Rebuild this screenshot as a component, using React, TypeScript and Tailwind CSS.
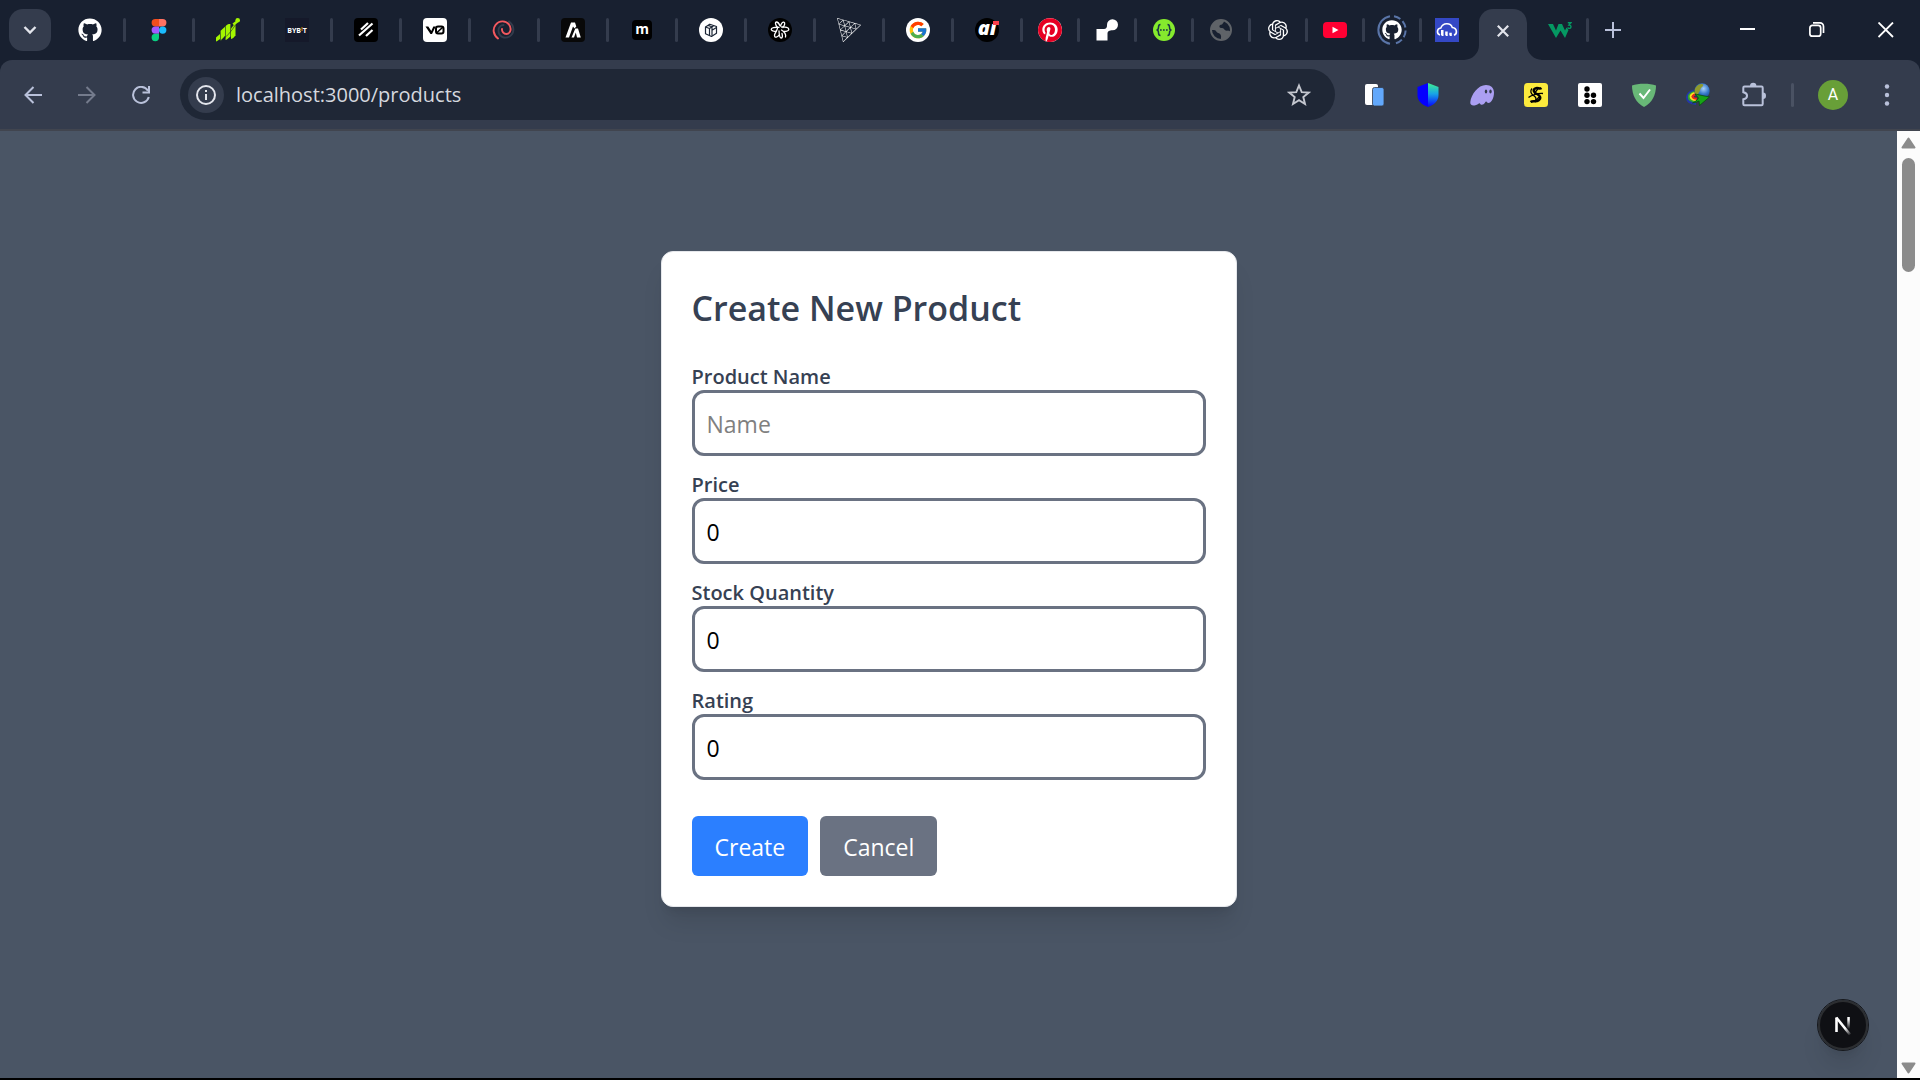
import type { ReactNode } from "react";
import { FaGithub } from "react-icons/fa";
import { FcGoogle } from "react-icons/fc";
import { SiThreedotjs, SiOpenai, SiPinterest } from "react-icons/si";

const FigmaIcon = () => (
  <svg viewBox="0 0 24 24" className="size-6">
    <path d="M8.3 1H12v7.4H8.3a3.7 3.7 0 0 1 0-7.4Z" fill="#f24e1e" />
    <path d="M12 1h3.7a3.7 3.7 0 0 1 0 7.4H12Z" fill="#ff7262" />
    <path d="M8.3 8.4H12v7.4H8.3a3.7 3.7 0 0 1 0-7.4Z" fill="#a259ff" />
    <circle cx="15.7" cy="12.1" r="3.7" fill="#1abcfe" />
    <path d="M8.3 15.8H12v3.7a3.7 3.7 0 1 1-3.7-3.7Z" fill="#0acf83" />
  </svg>
);

const BarsIcon = () => (
  <svg viewBox="0 0 24 24" className="size-6" fill="#a4f600">
    <path d="M0 19.5 4 16v5L0 24Z" />
    <path d="M4.6 12.8 9 8.8v9L4.6 23Z" />
    <path d="M9.6 8.2c1-1.6 2.6-2.2 4.8-2.2v12.5c-1.6 1.2-3 3-4.8 3.5Z" />
    <path d="M15 10.5 19.5 5v12.5c-1.2 1.5-2.6 3-4.5 3.5Z" />
    <circle cx="21.7" cy="2.3" r="2.3" />
    <path d="m16.5 5.5 4-3 1.5 2-4 3Z" />
    <path d="M0 23.8c7-1 13-7 19.5-17" fill="none" stroke="#182030" strokeWidth="0.6" />
  </svg>
);

const BybitIcon = () => (
  <span className="flex size-6 items-center justify-center bg-[#15192a] text-[7px] leading-none font-bold text-white">
    BYB<span className="pb-0.5 text-[5px] text-[#f7a600]">I</span>T
  </span>
);

const SlashesIcon = () => (
  <svg viewBox="0 0 24 24" className="size-6">
    <rect width="24" height="24" rx="4" fill="#000" />
    <path d="M7 11.500 14 5M5 17.500 18.500 5.500M12 18l6.500-6" fill="none" stroke="#fff" strokeWidth="2.2" />
  </svg>
);

const V0Icon = () => (
  <svg viewBox="0 0 24 24" className="size-6">
    <rect width="24" height="24" rx="4" fill="#fff" />
    <path d="M2.500 8.500h2.800L8.300 13l2-4.500h2.400L9 16H7.500Z" fill="#000" />
    <rect x="13" y="8.5" width="7.5" height="7" rx="2" fill="none" stroke="#000" strokeWidth="2" />
    <path d="m13.500 15 6.500-6" fill="none" stroke="#000" strokeWidth="1.7" />
  </svg>
);

const SpiralIcon = () => (
  <svg viewBox="0 0 24 24" className="size-6" fill="none" strokeWidth="1.9" strokeLinecap="round">
    <path d="M17 3.5c6 4.500 5.500 12 .5 15-5 2.800-11 0-11-6 0-3.500 2.500-5.500 5-5.500" stroke="#333c4c" />
    <path d="M6 20.500C1 16.500 .5 11 3.500 7 7 2.200 14 2.200 17 6.500c3 4 1.500 9.500-2.500 9.500-3 0-4.800-2.500-4.500-5" stroke="#f4595f" />
  </svg>
);

const ArchIcon = () => (
  <svg viewBox="0 0 24 24" className="size-6">
    <rect width="24" height="24" rx="4" fill="#080808" />
    <path d="M4.500 19.500 10 4.500h4l1.300 4-1.800 2-1.500-2-4 11Z" fill="#fff" />
    <path d="m10.500 19.500 3.800-9H17l2.800 9H16l-1.200-5-1.800 5Z" fill="#fff" />
  </svg>
);

const MIcon = () => (
  <span className="flex size-5 items-center justify-center rounded-sm bg-black pb-0.5 text-sm leading-none font-bold text-white">
    m
  </span>
);

const CubeIcon = () => (
  <svg viewBox="0 0 24 24" className="size-6" fill="none" stroke="#1c2636" strokeWidth="1.2" strokeLinejoin="round">
    <circle cx="12" cy="12" r="12" fill="#fff" stroke="none" />
    <path d="m6.500 9 4.300-2.800 6.700 2.300v6.700l-5 3.300-6-2.800Z" />
    <path d="m6.500 9 4 1.500v6.800M10.500 10.500 15 7.600M9 7.400l4 1.400v8.900M13 12.200l4.500-2.700" />
  </svg>
);

const AtomIcon = () => (
  <svg viewBox="0 0 24 24" className="size-6" fill="none" stroke="#fff" strokeWidth="1.3" strokeLinecap="round">
    <circle cx="12" cy="12" r="12" fill="#000" stroke="none" />
    <path d="M8 13.500c-3-.3-4.800-1.200-4.800-2.300C3.200 9.800 6.500 9 11 9.300M13.500 9c4-.3 7.300.6 7.300 2.200 0 1.300-2 2.200-5 2.300" />
    <path d="M9.500 9.500C7 6.500 7 4 8.500 4c1.200 0 2.600 1.500 3.600 4M12.500 8c.8-2.700 2.200-4.200 3.400-3.800 1.400.4 1 2.800-1 5.300" />
    <path d="M9.700 9.500c-.5 3.500-3.200 5.500-3.200 8 0 2.700 3.200 2 5-1M11 13c.2 4 .8 7 2.200 7s1.500-2 .8-4.500M13.500 12c3 2 4.800 4.500 4 7" />
  </svg>
);

const GoogleIcon = () => (
  <span className="flex size-6 items-center justify-center rounded-full bg-white">
    <FcGoogle className="size-5" />
  </span>
);

const AiIcon = () => (
  <span className="relative flex size-6 items-center justify-center rounded-full bg-black pb-1 text-xl leading-none font-extrabold text-white italic">
    aı
    <span className="absolute top-[3px] right-0 h-1 w-1.5 bg-[#f8404c]" />
  </span>
);

const PinterestIcon = () => (
  <span className="flex size-6 rounded-full bg-white">
    <SiPinterest className="size-6 text-[#e60023]" />
  </span>
);

const RenderIcon = () => (
  <svg viewBox="0 0 24 24" className="size-6" fill="#fff">
    <path d="M1.500 11H8c3.500 0 4-1.500 4-4a5.500 5.500 0 1 1 5.500 5.300c-3 0-5 .7-5 3.700v6.500h-11Z" />
  </svg>
);

const SwaggerIcon = () => (
  <svg viewBox="0 0 24 24" className="size-6">
    <circle cx="12" cy="12" r="11" fill="#85ea2d" />
    <g fill="none" stroke="#173647" strokeWidth="1.5">
      <path d="M8.500 6.500c-2 0-2 1-2 2.700S6 12 4.500 12c1.500 0 2 1 2 2.700s0 2.800 2 2.800M15.500 6.500c2 0 2 1 2 2.700s.5 2.800 2 2.800c-1.500 0-2 1-2 2.700s0 2.800-2 2.800" />
      <path d="M8 12h8" strokeDasharray="1.7 1.3" />
    </g>
  </svg>
);

const GlobeIcon = () => (
  <svg viewBox="0 0 24 24" className="size-6">
    <circle cx="12" cy="12" r="10" fill="none" stroke="#5f6368" strokeWidth="2" />
    <path d="M2 12C2 6 7 2 13 2c2 .2 2.500 1 1.500 2.500L13 6.500c-1.800.4-3 1-2.500 2.500.6 1.500 3.500.5 4.500 2s2 2 4 1.500l2.500 1C20 19 17 22 12.500 22c-1.500-1.500.5-3-1-5.500C10.500 14.500 8 15.500 7 13c-1-1.500-3-1-5-1Z" fill="#5f6368" />
  </svg>
);

const OpenAiIcon = () => <SiOpenai className="size-5 text-white" />;

const YoutubeIcon = () => (
  <svg viewBox="0 0 24 24" className="size-6">
    <rect y="4" width="24" height="16" rx="4" fill="#ff0033" />
    <path d="m9.500 8.800 6 3.200-6 3.200Z" fill="#fff" />
  </svg>
);

const GithubRingIcon = () => (
  <span className="relative flex items-center justify-center">
    <svg viewBox="0 0 30 30" className="absolute size-[30px] max-w-none" fill="none" stroke="#5a75a8" strokeWidth="2">
      <path d="M13 1.200A14 14 0 0 0 13 28.800" />
      <path d="M17 1.200A14 14 0 0 1 17 28.800" strokeDasharray="7 3" />
    </svg>
    <FaGithub className="size-5 text-white" />
  </span>
);

const CloudinaryIcon = () => (
  <svg viewBox="0 0 24 24" className="size-6">
    <rect width="24" height="24" fill="#3448c5" />
    <path d="M5 17c-3.500-1-3.500-6.500.8-7C8 4.500 15.500 4.500 17.300 9.500c5 .5 5.200 6.500 1.700 7.800" fill="none" stroke="#fff" strokeWidth="1.6" />
    <path d="M6 12h2.500v6H7l-1-1ZM10.200 13.500h2.500V18h-1.500l-1-1ZM14.300 14.800h2.500V18h-1.500l-1-.8Z" fill="#fff" />
  </svg>
);

const W3Icon = () => (
  <svg viewBox="0 0 24 24" className="size-6">
    <path d="M0 6h5l3 6.500L10.500 6H14l3 6.500 1.500-3 2 2.500-3.500 8-4.500-7.500-4.500 7.500Z" fill="#059862" />
    <path d="M19.800 4.800h3l-1.800 2.200c3 0 2.300 4-.3 3.300l-1.200-.6" fill="none" stroke="#059862" strokeWidth="1.4" />
  </svg>
);

const wideTabs: [string, ReactNode][] = [
  ["GitHub", <FaGithub className="size-6 text-white" />],
  ["Figma", <FigmaIcon />],
  ["Charts", <BarsIcon />],
  ["Bybit", <BybitIcon />],
  ["Slashes", <SlashesIcon />],
  ["v0", <V0Icon />],
  ["Spiral", <SpiralIcon />],
  ["Arch", <ArchIcon />],
  ["Mobbin", <MIcon />],
  ["Cube", <CubeIcon />],
  ["Atom", <AtomIcon />],
  ["Three.js", <SiThreedotjs className="size-6 text-white" />],
  ["Google", <GoogleIcon />],
  ["AI", <AiIcon />],
];

const narrowTabs: [string, ReactNode][] = [
  ["Pinterest", <PinterestIcon />],
  ["Render", <RenderIcon />],
  ["Swagger", <SwaggerIcon />],
  ["New page", <GlobeIcon />],
  ["ChatGPT", <OpenAiIcon />],
  ["YouTube", <YoutubeIcon />],
  ["GitHub repository", <GithubRingIcon />],
];

function Tab({ label, icon, wide }: { label: string; icon: ReactNode; wide?: boolean }) {
  return (
    <button aria-label={label} className={wide ? "flex w-[69px] items-center" : "flex w-[57px] items-center"}>
      <span className="flex flex-1 items-center justify-center">{icon}</span>
      <span className="h-6 w-[3px] rounded-sm bg-[#343c4d]" />
    </button>
  );
}

function TabStrip() {
  return (
    <div className="flex h-[60px] items-stretch bg-[#182030]">
      <div className="flex w-[57px] items-center pl-[9px]">
        <button aria-label="Search tabs" className="flex size-[42px] items-center justify-center rounded-[14px] bg-[#343c4d]">
          <svg viewBox="0 0 14 14" className="size-3.5" fill="none" stroke="#e3e5ec" strokeWidth="2.4">
            <path d="m1.500 4 5.500 5.500L12.500 4" />
          </svg>
        </button>
      </div>
      {wideTabs.map(([label, icon]) => (
        <Tab key={label} label={label} icon={icon} wide />
      ))}
      {narrowTabs.map(([label, icon]) => (
        <Tab key={label} label={label} icon={icon} />
      ))}
      <button aria-label="Cloudinary" className="flex w-[42px] items-center justify-center pl-2">
        <CloudinaryIcon />
      </button>
      <div className="flex items-end">
        <svg viewBox="0 0 15 15" className="size-[15px]" fill="#343c4d">
          <path d="M15 0v15H0A15 15 0 0 0 15 0Z" />
        </svg>
        <button aria-label="Close tab" className="flex h-[51px] w-12 items-center justify-center rounded-t-[14px] bg-[#343c4d] pb-2">
          <svg viewBox="0 0 12 12" className="size-3" stroke="#e3e5ec" strokeWidth="2.2">
            <path d="m.8.8 10.400 10.400M11.200.8.8 11.200" />
          </svg>
        </button>
        <svg viewBox="0 0 15 15" className="size-[15px]" fill="#343c4d">
          <path d="M0 0v15h15A15 15 0 0 1 0 0Z" />
        </svg>
      </div>
      <button aria-label="W3Schools" className="flex w-[47px] items-center justify-between pl-1.5">
        <W3Icon />
        <span className="h-6 w-[3px] rounded-sm bg-[#343c4d]" />
      </button>
      <button aria-label="New tab" className="flex w-12 items-center justify-center">
        <svg viewBox="0 0 16 16" className="size-4" stroke="#b9c1da" strokeWidth="2">
          <path d="M8 0v16M0 8h16" />
        </svg>
      </button>
      <div className="ml-auto flex">
        <button aria-label="Minimize" className="flex w-[69px] items-center justify-center">
          <svg viewBox="0 0 16 16" className="size-4" stroke="#fff" strokeWidth="2">
            <path d="M0 7h15" />
          </svg>
        </button>
        <button aria-label="Restore" className="flex w-[69px] items-center justify-center">
          <svg viewBox="0 0 16 16" className="size-4" fill="none" stroke="#fff" strokeWidth="1.7">
            <rect x=".9" y="3.4" width="10.8" height="10.8" rx="2.5" />
            <path d="M4 .9h7A3.500 3.500 0 0 1 14.500 4.400V11" />
          </svg>
        </button>
        <button aria-label="Close" className="flex w-[69px] items-center justify-center">
          <svg viewBox="0 0 16 16" className="size-4" stroke="#fff" strokeWidth="1.8">
            <path d="m.5.5 14.500 14.500M15 .5.5 15" />
          </svg>
        </button>
      </div>
    </div>
  );
}

const PagesExt = () => (
  <svg viewBox="0 0 24 24" className="size-6">
    <rect x="3" y="1" width="13" height="21" rx="2" fill="#fff" />
    <rect x="10.5" y="4.5" width="11.5" height="18.5" rx="2" fill="#62a8fb" stroke="#343c4d" strokeWidth=".8" />
  </svg>
);

const ShieldExt = () => (
  <svg viewBox="0 0 24 24" className="size-6">
    <defs>
      <linearGradient id="shield" x1="0" y1="0" x2="0" y2="1">
        <stop offset="0" stopColor="#3ff08f" />
        <stop offset=".45" stopColor="#18a4e6" />
        <stop offset="1" stopColor="#0500ff" />
      </linearGradient>
    </defs>
    <path d="M12 0 1.500 4v8c0 6 4 9.500 10.500 12Z" fill="#0500ff" />
    <path d="m12 0 10.500 4v8c0 6-4 9.500-10.500 12Z" fill="url(#shield)" />
  </svg>
);

const GhostExt = () => (
  <svg viewBox="0 0 24 24" className="size-6">
    <path d="M24 9.500c0 6-3 10.500-5.500 10.500-1.800 0-1.500-1.800-2.500-1.500S14.500 22 11.500 21.700c-1.500-.2-1.300-1.700-2-1.500-1.500.4-2.500 2-5 2.300C1.500 22.800 0 21.500.3 19 1.200 11.500 8 2 16 2c5 0 8 3 8 7.500Z" fill="#ab9ff2" />
    <ellipse cx="16" cy="8.500" rx="1.2" ry="1.9" fill="#343c4d" />
    <ellipse cx="20.5" cy="8.500" rx="1.2" ry="1.9" fill="#343c4d" />
  </svg>
);

const ScribeExt = () => (
  <svg viewBox="0 0 24 24" className="size-6">
    <rect width="24" height="24" rx="3.5" fill="#fdeb3d" />
    <path d="M17.500 5c-2 1.500-3.500-.8-6 .3-3 1.400-2 4 1.500 5.700 3.500 1.800 4.500 4.500 1.500 6.500-2.800 1.800-5.500-.3-8 1.500" fill="none" stroke="#000" strokeWidth="2.4" />
    <path d="M8 5.500C6 8 6.500 10.500 9.500 12.500s3 3.500 1.500 5.500M4.500 14.500c2-2 9-4.500 14.500-4M14.500 5 11 9.500M15 14l-4 5" fill="none" stroke="#000" strokeWidth="1.3" />
  </svg>
);

const DotsExt = () => (
  <svg viewBox="0 0 24 24" className="size-6">
    <rect width="24" height="24" rx="2" fill="#fff" />
    <g fill="#000">
      <circle cx="9" cy="6" r="2.7" />
      <circle cx="9" cy="12.3" r="2.7" />
      <circle cx="15.5" cy="12.3" r="2.7" />
      <circle cx="9" cy="18.6" r="2.7" />
      <circle cx="15.5" cy="18.6" r="2.7" />
    </g>
  </svg>
);

const AdguardExt = () => (
  <svg viewBox="0 0 24 24" className="size-6">
    <path d="M0 2.500C6 0 18 0 24 2.500 24 12 20 20 12 24 4 20 0 12 0 2.500Z" fill="#68b877" />
    <path d="m7.500 10.500 4 4.500L18 6.500" fill="none" stroke="#fff" strokeWidth="2" />
  </svg>
);

const IdmExt = () => (
  <svg viewBox="0 0 24 24" className="size-6">
    <defs>
      <radialGradient id="globe" cx=".6" cy=".35" r=".7">
        <stop offset="0" stopColor="#a9d2fb" />
        <stop offset=".5" stopColor="#3577c8" />
        <stop offset="1" stopColor="#123a75" />
      </radialGradient>
    </defs>
    <g fill="none" strokeWidth="2">
      <path d="M8 8C-1 11-1 20 10 20.500" stroke="#2338a8" strokeWidth="3" />
      <path d="M8.500 9c-8 2-7.500 9 1 9.500" stroke="#2fa533" />
      <path d="M9 10c-6 1.500-6 6.500 1 7" stroke="#ffe11a" />
      <path d="M9.500 11.500c-4 1-4 4 1.500 4.300" stroke="#e8281e" />
    </g>
    <circle cx="16" cy="8" r="7.7" fill="url(#globe)" />
    <path d="M10 4c2-2.500 5-3.500 7-2.500 1 2-2 2.500-2.500 4.500S12.500 10 11 13C8 10 8 6.500 10 4Z" fill="#8f9a2c" />
    <path d="M9 11 23.500 14l-10 8.500-.5-4.500c-2 1-4 1.800-6.500 2 3-1.500 5-3 6-5Z" fill="#17a317" stroke="#0a4d10" strokeWidth=".8" />
  </svg>
);

const PuzzleIcon = () => (
  <svg viewBox="-3 -1 28 28" className="size-7">
    <path d="M3.500 4.500h17a1.200 1.200 0 0 1 1.200 1.200V22a1.200 1.200 0 0 1-1.200 1.200h-17A1.200 1.200 0 0 1 2.300 22v-4.700c5-.8 5-6.300 0-7.100V5.700a1.200 1.200 0 0 1 1.200-1.200Z" fill="none" stroke="#b9c1da" strokeWidth="2" />
    <path d="M9 4a3.200 3.200 0 0 1 6.400 0ZM22 10.500a3 3.200 0 0 1 0 6.400Z" fill="#b9c1da" />
  </svg>
);

const extensions: [string, ReactNode][] = [
  ["Pages", <PagesExt />],
  ["Shield", <ShieldExt />],
  ["Wallet", <GhostExt />],
  ["Scribe", <ScribeExt />],
  ["Dots", <DotsExt />],
  ["AdGuard", <AdguardExt />],
  ["Download manager", <IdmExt />],
  ["Extensions", <PuzzleIcon />],
];

function Toolbar() {
  return (
    <div className="bg-[#182030]">
      <div className="flex h-[71px] items-center rounded-t-xl border-b-2 border-[#41454f] bg-[#343c4d] pl-1.5">
        <button aria-label="Back" className="flex w-[54px] justify-center">
          <svg viewBox="0 0 18 18" className="size-[18px]" fill="none" stroke="#b9c1da" strokeWidth="2">
            <path d="M18 9H1.500M9.500 1 1.500 9l8 8" />
          </svg>
        </button>
        <button aria-label="Forward" className="flex w-[54px] justify-center">
          <svg viewBox="0 0 18 18" className="size-[18px]" fill="none" stroke="#747b8c" strokeWidth="2">
            <path d="M0 9h16.500M8.500 1l8 8-8 8" />
          </svg>
        </button>
        <button aria-label="Reload" className="flex w-[54px] justify-center">
          <svg viewBox="0 0 18 18" className="size-[18px]" fill="none" stroke="#b9c1da" strokeWidth="2">
            <path d="M16 4.800A8 8 0 1 0 16.800 11M17 0v6.500h-6.500" />
          </svg>
        </button>
        <div className="ml-3 flex h-[51px] flex-1 items-center rounded-full bg-[#1f2736] pr-6 pl-2">
          <button aria-label="Site information" className="flex size-9 items-center justify-center rounded-full bg-[#343c4d]">
            <svg viewBox="0 0 20 20" className="size-5" fill="none" stroke="#e3e5ec" strokeWidth="2">
              <circle cx="10" cy="10" r="9" />
              <path d="M10 9v6M10 5v2" />
            </svg>
          </button>
          <input
            aria-label="Address"
            defaultValue="localhost:3000/products"
            className="ml-3 h-9 flex-1 bg-transparent text-xl text-[#d5d8df] outline-none"
          />
          <button aria-label="Bookmark this page">
            <svg viewBox="0 0 24 24" className="size-6" fill="none" stroke="#c4c7cf" strokeWidth="1.9">
              <path d="m12 2.500 2.700 6.600 7 .5-5.400 4.500 1.700 6.900-6-3.800L6 21l1.700-6.900L2.300 9.600l7-.5Z" />
            </svg>
          </button>
        </div>
        <div className="ml-3 flex items-center">
          {extensions.map(([label, icon]) => (
            <button key={label} aria-label={label} className="flex w-[54px] justify-center">
              {icon}
            </button>
          ))}
        </div>
        <span className="ml-3 h-6 w-[3px] rounded-sm bg-[#4a5263]" />
        <button aria-label="Profile" className="ml-6 flex size-[30px] items-center justify-center rounded-full bg-[#689f38] font-[Roboto] text-base text-white">
          A
        </button>
        <button aria-label="Menu" className="flex w-[72px] justify-center pl-1.5">
          <svg viewBox="0 0 6 22" className="h-[22px] w-1.5" fill="#b9c1da">
            <circle cx="3" cy="2.5" r="2.2" />
            <circle cx="3" cy="11" r="2.2" />
            <circle cx="3" cy="19.5" r="2.2" />
          </svg>
        </button>
      </div>
    </div>
  );
}

const fields = [
  { id: "name", label: "Product Name", placeholder: "Name" },
  { id: "price", label: "Price", value: "0" },
  { id: "stock", label: "Stock Quantity", value: "0" },
  { id: "rating", label: "Rating", value: "0" },
];

function ProductForm() {
  return (
    <form className="mt-30 w-full max-w-xl self-start rounded-xl border border-gray-200 bg-white p-[30px] shadow-xl">
      <h1 className="mb-8 text-[34px] leading-[52px] font-semibold text-gray-700">Create New Product</h1>
      <div className="flex flex-col gap-[18px]">
        {fields.map((f) => (
          <div key={f.id} className="flex flex-col">
            <label htmlFor={f.id} className="pb-0.5 text-xl leading-[22px] font-semibold text-gray-700">
              {f.label}
            </label>
            <input
              id={f.id}
              defaultValue={f.value}
              placeholder={f.placeholder}
              className="h-[66px] w-full rounded-xl border-3 border-gray-500 px-3 pt-0.5 text-[23px] text-black placeholder:text-[#808080]"
            />
          </div>
        ))}
      </div>
      <div className="mt-9 flex gap-3">
        <button type="button" className="h-15 rounded-md bg-blue-500 px-[23px] pt-0.5 text-[23px] text-white">
          Create
        </button>
        <button type="button" className="h-15 rounded-md bg-gray-500 px-[23px] pt-0.5 text-[23px] text-white">
          Cancel
        </button>
      </div>
    </form>
  );
}

function Scrollbar() {
  return (
    <div className="flex w-[23px] flex-col items-center bg-[#fcfcfc] pt-1.5 pb-1">
      <svg viewBox="0 0 15 12" className="h-3 w-[15px]" fill="#8b8b8b" stroke="#8b8b8b" strokeWidth="2" strokeLinejoin="round">
        <path d="M7.500 1.500 13.500 10.500h-12Z" />
      </svg>
      <span className="mt-[9px] h-[114px] w-[13px] rounded-full bg-[#8b8b8b]" />
      <svg viewBox="0 0 15 12" className="mt-auto h-3 w-[15px]" fill="#8b8b8b" stroke="#8b8b8b" strokeWidth="2" strokeLinejoin="round">
        <path d="M7.500 10.500 1.500 1.500h12Z" />
      </svg>
    </div>
  );
}

function DevBadge() {
  return (
    <button aria-label="Open Next.js Dev Tools" className="absolute right-[29px] bottom-7 flex size-[50px] items-center justify-center rounded-full border-2 border-[#2c2e31] bg-[#0f1014] shadow-xl outline-1 outline-[#16181c]">
      <svg viewBox="0 0 18 20" className="h-5 w-[18px]" fill="none" strokeWidth="2.6">
        <defs>
          <linearGradient id="nstem" x1="0" y1="0" x2="0" y2="1">
            <stop offset=".2" stopColor="#fff" />
            <stop offset="1" stopColor="#fff" stopOpacity="0" />
          </linearGradient>
          <linearGradient id="ndiag" gradientUnits="userSpaceOnUse" x1="9" y1="10" x2="17" y2="20">
            <stop offset=".3" stopColor="#fff" />
            <stop offset="1" stopColor="#fff" stopOpacity="0" />
          </linearGradient>
        </defs>
        <path d="M2.500 17V2.500" stroke="#fff" />
        <path d="M2.300 2.500 16 19.500" stroke="url(#ndiag)" />
        <rect x="13.3" y="2" width="2.5" height="12" fill="url(#nstem)" />
      </svg>
    </button>
  );
}

export default function App() {
  return (
    <div className="flex min-h-screen flex-col border-b-2 border-black bg-gray-600 font-['Open_Sans',sans-serif]">
      <header>
        <TabStrip />
        <Toolbar />
      </header>
      <div className="flex flex-1">
        <main className="relative flex flex-1 justify-center">
          <ProductForm />
          <DevBadge />
        </main>
        <Scrollbar />
      </div>
    </div>
  );
}
